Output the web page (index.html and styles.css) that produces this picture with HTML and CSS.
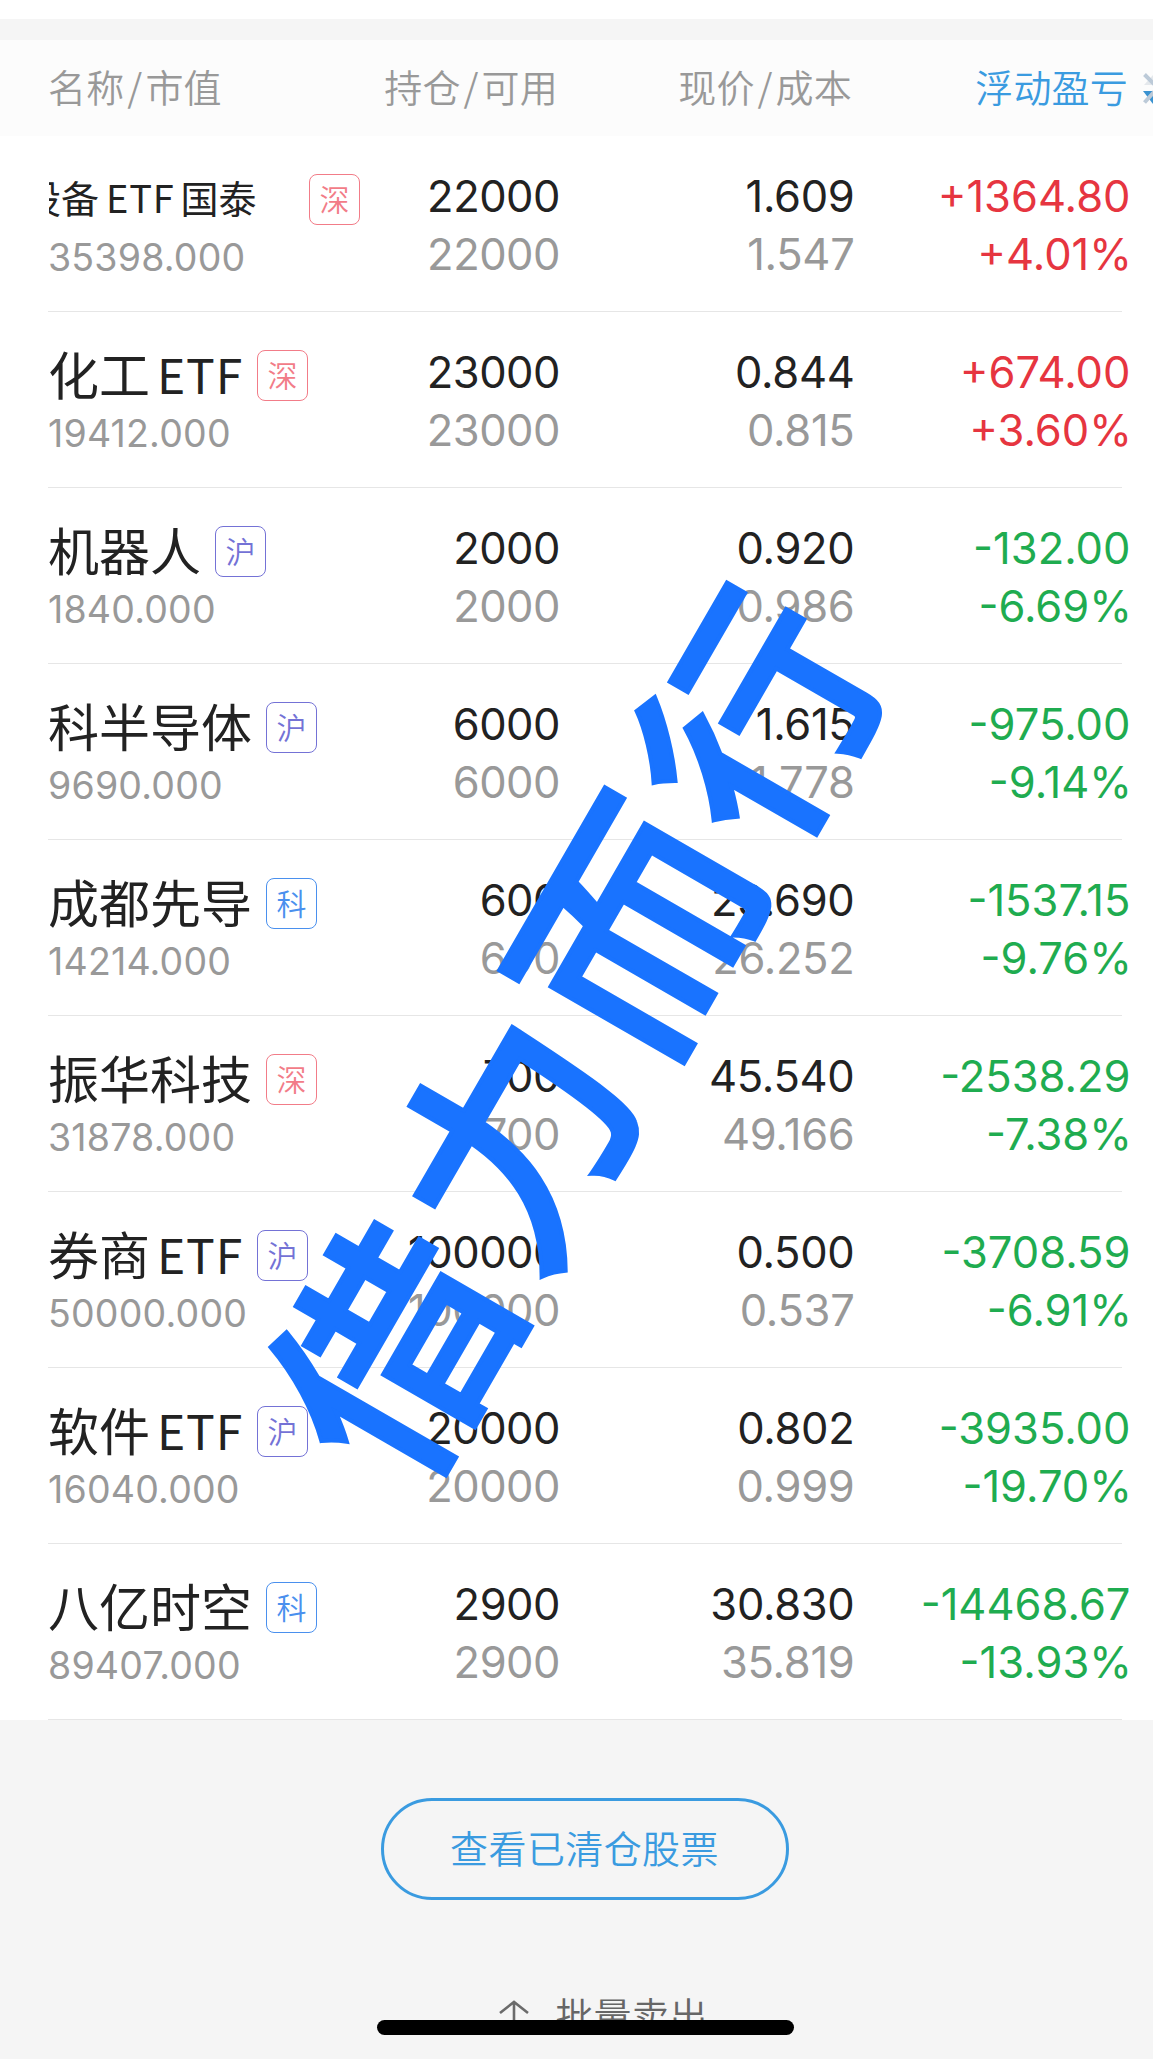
FILE: index.html
```html
<!DOCTYPE html>
<html lang="zh-CN">
<head>
<meta charset="utf-8">
<title>持仓</title>
<link rel="stylesheet" href="styles.css">
</head>
<body>
<main class="screen">
  <div class="gap"></div>
  <header class="row head">
    <span class="h-name">名称<i>/</i>市值</span>
    <span class="c2">持仓<i>/</i>可用</span>
    <span class="c3">现价<i>/</i>成本</span>
    <span class="c4 active">浮动盈亏</span>
    <svg class="sort" viewBox="0 0 10 44" width="10" height="44"><path d="M1 19h9V9z" fill="#e4e8ec"/><path d="M0 25h10v13z" fill="#3a92d0"/><path d="M1.500 8.500l10 10M1.500 36.500l10-11" stroke="#bccad8" stroke-width="4"/></svg>
  </header>
  <section class="list">
    <article class="row"><div class="c1"><div class="name small"><span class="clip"><span class="shift">设备<b>ETF</b>国泰</span></span><em class="tag sz">深</em></div><p>35398.000</p></div><div class="c2">22000<p>22000</p></div><div class="c3">1.609<p>1.547</p></div><div class="c4 up">+1364.80<p>+4.01%</p></div></article>
    <article class="row"><div class="c1"><div class="name">化工<b>ETF</b><em class="tag sz">深</em></div><p>19412.000</p></div><div class="c2">23000<p>23000</p></div><div class="c3">0.844<p>0.815</p></div><div class="c4 up">+674.00<p>+3.60%</p></div></article>
    <article class="row"><div class="c1"><div class="name">机器人<em class="tag sh">沪</em></div><p>1840.000</p></div><div class="c2">2000<p>2000</p></div><div class="c3">0.920<p>0.986</p></div><div class="c4 down">-132.00<p>-6.69%</p></div></article>
    <article class="row"><div class="c1"><div class="name">科半导体<em class="tag sh">沪</em></div><p>9690.000</p></div><div class="c2">6000<p>6000</p></div><div class="c3">1.615<p>1.778</p></div><div class="c4 down">-975.00<p>-9.14%</p></div></article>
    <article class="row"><div class="c1"><div class="name">成都先导<em class="tag kc">科</em></div><p>14214.000</p></div><div class="c2">600<p>600</p></div><div class="c3">23.690<p>26.252</p></div><div class="c4 down">-1537.15<p>-9.76%</p></div></article>
    <article class="row"><div class="c1"><div class="name">振华科技<em class="tag sz">深</em></div><p>31878.000</p></div><div class="c2">700<p>700</p></div><div class="c3">45.540<p>49.166</p></div><div class="c4 down">-2538.29<p>-7.38%</p></div></article>
    <article class="row"><div class="c1"><div class="name">券商<b>ETF</b><em class="tag sh">沪</em></div><p>50000.000</p></div><div class="c2">100000<p>100000</p></div><div class="c3">0.500<p>0.537</p></div><div class="c4 down">-3708.59<p>-6.91%</p></div></article>
    <article class="row"><div class="c1"><div class="name">软件<b>ETF</b><em class="tag sh">沪</em></div><p>16040.000</p></div><div class="c2">20000<p>20000</p></div><div class="c3">0.802<p>0.999</p></div><div class="c4 down">-3935.00<p>-19.70%</p></div></article>
    <article class="row"><div class="c1"><div class="name">八亿时空<em class="tag kc">科</em></div><p>89407.000</p></div><div class="c2">2900<p>2900</p></div><div class="c3">30.830<p>35.819</p></div><div class="c4 down">-14468.67<p>-13.93%</p></div></article>
  </section>
  <footer class="foot">
    <button class="cleared">查看已清仓股票</button>
    <div class="batch"><svg width="30" height="38" viewBox="0 0 30 38" fill="none" stroke="#6b6b6b" stroke-width="2.6"><path d="M15 2v30M1 13L15 2l14 11"/></svg><span>批量卖出</span></div>
  </footer>
  <div class="home-bar"></div>
  <div class="watermark">借力而行</div>
</main>
</body>
</html>
```
FILE: styles.css
```css
* { box-sizing: border-box; }
body { margin: 0; background: #fff; }
p { margin: 0; }
i, em, b { font-style: normal; font-weight: inherit; }

.screen {
  position: relative;
  width: 1153px;
  height: 2059px;
  overflow: hidden;
  display: flex;
  flex-direction: column;
  font-family: Inter, "Noto Sans CJK SC", sans-serif;
  color: #222;
}
.gap { height: 21px; margin-top: 19px; background: #f5f5f5; }

.row {
  display: grid;
  grid-template-columns: 320px 191px 294px 275px 1fr;
  padding-left: 48px;
  height: 176px;
}
.head {
  height: 96px;
  align-items: center;
  background: #fcfcfc;
  color: #999;
  font: 350 38px/56px "Noto Sans CJK SC", sans-serif;
  letter-spacing: 0.2px;
}
.head span { padding-bottom: 4px; }
.head i { display: inline-block; width: 21px; text-align: center; }
.c2, .c3, .c4 { text-align: right; white-space: nowrap; }
.head .c2, .head .c3 { margin-right: 1px; }
.head .active { color: #3a9be0; }
.sort { justify-self: end; }

.list .row {
  font-size: 43.5px;
  font-weight: 400;
  line-height: 58px;
  padding-top: 31px;
  background: linear-gradient(#e6e6e6, #e6e6e6) 48px 100% / 1074px 1.5px no-repeat;
}
.list .c2 { letter-spacing: -0.5px; margin-right: -1px; }
.list .c3 { letter-spacing: -0.3px; margin-right: -1.5px; }
.list .c4 { margin-right: -2.5px; }
.c2 p, .c3 p { color: #999; }
.c4 p { margin-right: -1.5px; }
.up { color: #e63540; }
.down { color: #1fac50; }

.name {
  display: flex;
  align-items: center;
  height: 60px;
  font: 400 51px/60px "Noto Sans CJK SC", sans-serif;
  white-space: nowrap;
}
.name b { margin-left: 7px; font-size: 48px; letter-spacing: 0.8px; }
.small { font-size: 38px; }
.small b { font-size: 38px; margin: 0 6px 0 7px; }
.clip { width: 246px; height: 60px; margin-left: 1px; overflow: hidden; }
.shift { display: inline-block; margin-left: -26px; }
.c1 p {
  margin-top: 6px;
  font-size: 37.5px;
  line-height: 49px;
  letter-spacing: 0.2px;
  color: #999;
}
.tag {
  width: 51px;
  height: 51px;
  margin: 4px 0 0 14px;
  border: 1.5px solid;
  border-radius: 8px;
  font-size: 30px;
  font-weight: 350;
  line-height: 46px;
  text-align: center;
}
.sz { color: #f27c88; }
.sh { color: #7472d6; }
.kc { color: #4a90ee; }

.foot {
  flex: 1;
  display: flex;
  flex-direction: column;
  align-items: center;
  padding: 78px 0 0 17px;
  background: #f5f5f5;
}
.cleared {
  width: 408px;
  height: 102px;
  border: 3px solid #3a9be0;
  border-radius: 51px;
  background: none;
  color: #3a9be0;
  font: 350 38px/56px "Noto Sans CJK SC", sans-serif;
  letter-spacing: 0.4px;
  padding: 0 1px 4px 0;
}
.batch {
  display: flex;
  gap: 26px;
  margin-top: 86px;
  padding-left: 37px;
  font: 350 38px/56px "Noto Sans CJK SC", sans-serif;
  color: #666;
}
.batch svg { margin-top: 14px; }
.home-bar {
  position: absolute;
  left: 377px;
  top: 2020px;
  width: 417px;
  height: 15px;
  border-radius: 8px;
  background: #000;
}
.watermark {
  position: absolute;
  left: 567px;
  top: 1023px;
  transform: translate(-50%, -50%) rotate(-60deg);
  font: 500 234px/1 "Noto Sans CJK SC", sans-serif;
  -webkit-text-stroke: 4px #1973ff;
  letter-spacing: 10px;
  white-space: nowrap;
  color: #1973ff;
}
```
